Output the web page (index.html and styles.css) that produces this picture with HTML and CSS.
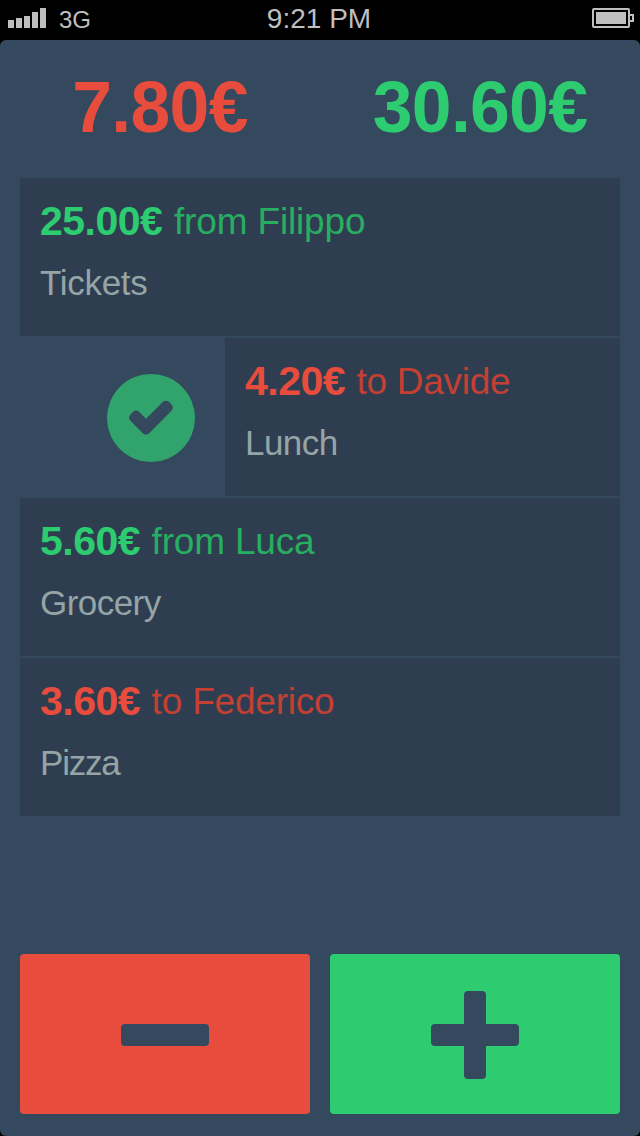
FILE: index.html
```html
<!DOCTYPE html>
<html lang="en">
<head>
<meta charset="utf-8">
<title>Debts</title>
<link rel="stylesheet" href="styles.css">
</head>
<body>
<header class="status">
  <div class="carrier">
    <svg class="signal" width="38" height="20" viewBox="0 0 38 20"><path d="M0 12h6v8H0zM8 10h6v10H8zM16 8h6v12h-6zM24 4h6v16h-6zM32 0h6v20h-6z"/></svg>
    <span class="network">3G</span>
  </div>
  <time class="clock">9:21 PM</time>
  <svg class="battery" width="42" height="20" viewBox="0 0 42 20"><rect class="shell" x="1" y="1" width="36" height="18" rx="1"/><rect x="4" y="4" width="30" height="12"/><path class="shell" d="M38 7h3v6h-3"/></svg>
</header>
<main class="screen">
  <section class="totals">
    <div class="total out">7.80€</div>
    <div class="total in">30.60€</div>
  </section>
  <ul class="list">
    <li class="row">
      <article class="card">
        <div class="line"><strong class="amount in">25.00€</strong><span class="person from filippo">from Filippo</span></div>
        <div class="note">Tickets</div>
      </article>
    </li>
    <li class="row swiped">
      <div class="action">
        <svg width="88" height="88" viewBox="0 0 88 88"><circle class="disc" cx="44" cy="44" r="44"/><path class="tick" d="M23.4 40.4L25.9 37.9A4.5 4.5 0 0 1 32.3 37.9L39 44.8L55.8 28A4.5 4.5 0 0 1 62.2 28L64.5 30.4A4.5 4.5 0 0 1 64.5 36.8L42.2 59.3A4.5 4.5 0 0 1 35.8 59.3L23.4 46.8A4.5 4.5 0 0 1 23.4 40.4Z"/></svg>
      </div>
      <article class="card">
        <div class="line"><strong class="amount out">4.20€</strong><span class="person to davide">to Davide</span></div>
        <div class="note lunch">Lunch</div>
      </article>
    </li>
    <li class="row">
      <article class="card">
        <div class="line"><strong class="amount in">5.60€</strong><span class="person from luca">from Luca</span></div>
        <div class="note grocery">Grocery</div>
      </article>
    </li>
    <li class="row">
      <article class="card">
        <div class="line"><strong class="amount out">3.60€</strong><span class="person to federico">to Federico</span></div>
        <div class="note pizza">Pizza</div>
      </article>
    </li>
  </ul>
  <nav class="buttons">
    <button class="button minus" aria-label="Add debt"><svg width="88" height="88" viewBox="0 0 88 88"><rect y="33" width="88" height="22" rx="4"/></svg></button>
    <button class="button plus" aria-label="Add credit"><svg width="88" height="88" viewBox="0 0 88 88"><rect y="33" width="88" height="22" rx="4"/><rect x="33" width="22" height="88" rx="4"/></svg></button>
  </nav>
</main>
</body>
</html>
```
FILE: styles.css
```css
* { box-sizing: border-box; }
body {
  margin: 0;
  width: 640px;
  height: 1136px;
  overflow: hidden;
  background: #000;
  font-family: "Liberation Sans", Arial, sans-serif;
}
svg { display: block; }
.status {
  height: 40px;
  display: grid;
  grid-template-columns: 1fr auto 1fr;
  padding: 0 6px 0 8px;
  color: #bfbfbf;
  fill: #bfbfbf;
}
.carrier { display: flex; gap: 13px; }
.signal, .battery { margin-top: 8px; }
.network { font-size: 24px; line-height: 40px; }
.clock { margin: 0 4px 0 0; font-size: 28px; line-height: 38px; }
.battery { justify-self: end; }
.shell { fill: none; stroke: #bfbfbf; stroke-width: 2; }
.screen {
  height: 1096px;
  display: flex;
  flex-direction: column;
  padding: 0 20px 22px;
  border-radius: 6px;
  background: #34495e;
}
.totals {
  height: 138px;
  display: grid;
  grid-template-columns: 280px 320px;
  padding-top: 27px;
  text-align: center;
  font-size: 71.5px;
  font-weight: 700;
  line-height: 80px;
  letter-spacing: -0.7px;
}
.total.in { padding-left: 40px; }
.in { color: #2ecc71; }
.out { color: #e74c3c; }
.list {
  margin: 0;
  padding: 0;
  list-style: none;
  display: flex;
  flex-direction: column;
  gap: 2px;
}
.row { display: flex; height: 158px; }
.action { width: 205px; padding: 36px 0 0 87px; }
.disc { fill: #30a46c; }
.tick { fill: #34495e; }
.card { flex: 1; padding: 20px; background: #2e3e50; }
.line { display: flex; gap: 11.5px; height: 46px; }
.amount { font-size: 41px; line-height: 46px; letter-spacing: -0.5px; }
.person { font-size: 37px; line-height: 47px; white-space: nowrap; }
.filippo { letter-spacing: -0.15px; }
.davide { letter-spacing: -0.3px; }
.luca, .federico { letter-spacing: -0.2px; }
.from { color: #27ae60; }
.to { color: #c44033; }
.note { margin-top: 19px; font-size: 35px; line-height: 40px; letter-spacing: -0.3px; color: #95a5a6; }
.lunch, .grocery { letter-spacing: -0.55px; }
.pizza { letter-spacing: -1.2px; }
.buttons { margin-top: auto; display: flex; gap: 20px; }
.button {
  flex: 1;
  height: 160px;
  display: grid;
  place-items: center;
  padding: 2px 0 0;
  border: 0;
  border-radius: 4px;
  fill: #34495e;
}
.minus { background: #e74c3c; }
.plus { background: #2ecc71; }
```
